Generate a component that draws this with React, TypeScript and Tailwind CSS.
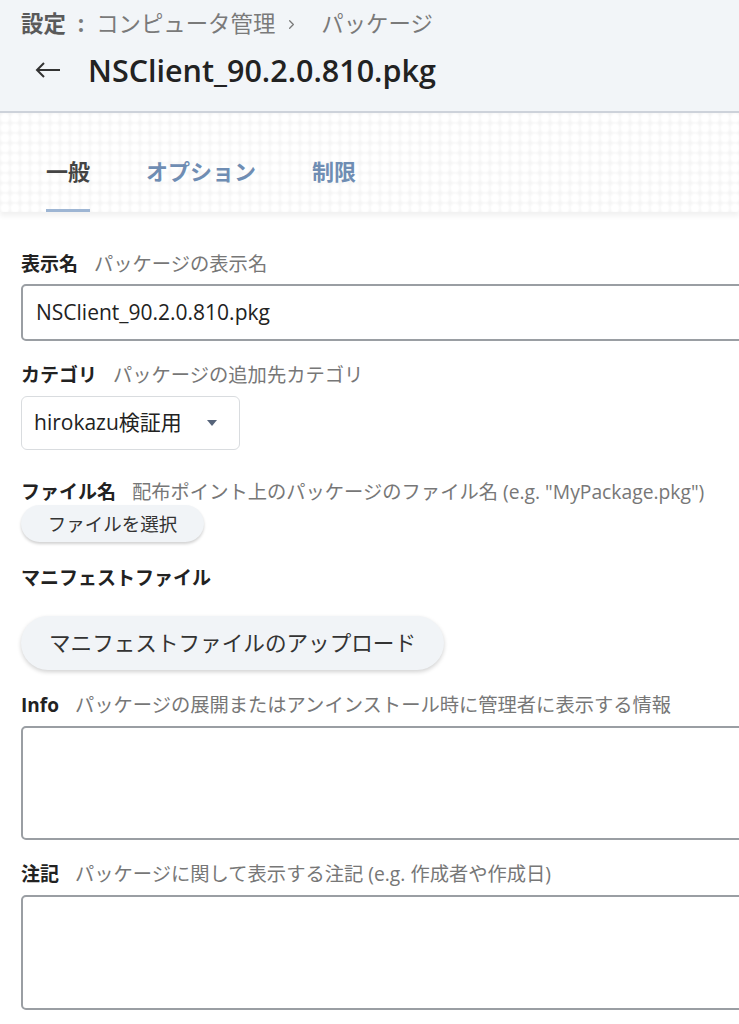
import { ChevronRight } from 'lucide-react';

const font = "font-['Open_Sans','Noto_Sans_CJK_JP',sans-serif]";

function FieldLabel({ name, hint }: { name: string; hint?: string }) {
  return (
    <div className="flex items-baseline gap-[16px] leading-[26px]">
      <span className="text-[19px] font-bold text-[#222]">{name}</span>
      {hint ? <span className="text-[19.3px] text-[#777]">{hint}</span> : null}
    </div>
  );
}

function Tab({ label, active }: { label: string; active?: boolean }) {
  return (
    <div className="flex flex-col items-center">
      <span
        className={
          active
            ? 'text-[22px] font-bold leading-[30px] text-[#444]'
            : 'text-[22px] font-bold leading-[30px] text-[#6f8db3]'
        }
      >
        {label}
      </span>
      <span
        className={active ? 'mt-[23px] h-[3px] w-full bg-[#9db5d3]' : 'mt-[23px] h-[3px] w-full'}
      />
    </div>
  );
}

export default function App() {
  return (
    <div className={`${font} w-[739px] overflow-hidden bg-white text-[#222]`}>
      {/* page header */}
      <header className="h-[113px] border-b-2 border-[#cdd2da] bg-[#f2f5f8] pl-[21px]">
        <div className="flex items-center pt-[8px] text-[22.4px] leading-[32px] text-[#7a7a7a]">
          <span className="font-bold text-[#5a5a5a]">設定</span>
          <span className="mx-[12px] font-bold">:</span>
          <span>コンピュータ管理</span>
          <ChevronRight className="ml-[9px] mr-[22px] h-[15px] w-[15px]" strokeWidth={2} />
          <span>パッケージ</span>
        </div>
        <div className="mt-[10px] flex items-center">
          <svg width="30" height="20" viewBox="0 0 30 20" className="ml-[12px] text-[#333]">
            <path d="M27 10H4M11 3L4 10l7 7" fill="none" stroke="currentColor" strokeWidth="2" />
          </svg>
          <h1 className="ml-[25px] text-[30.5px] font-semibold leading-[40px] text-[#222]">
            NSClient_90.2.0.810.pkg
          </h1>
        </div>
      </header>

      {/* tabs */}
      <nav className="flex h-[99px] items-end gap-[56px] bg-[#f7f7f7] bg-[radial-gradient(circle,#ffffff_45%,#f5f5f5_85%)] bg-[length:10px_10px] pl-[46px] shadow-[0_4px_5px_rgba(0,0,0,0.06)]">
        <Tab label="一般" active />
        <Tab label="オプション" />
        <Tab label="制限" />
      </nav>

      {/* form */}
      <form className="flex flex-col pl-[21px] pt-[39px]">
        <FieldLabel name="表示名" hint="パッケージの表示名" />
        <div className="mt-[7px] flex h-[57px] w-[760px] items-center rounded-[5px] border-2 border-[#9a9ea3] pl-[13px] text-[21px] text-[#222]">
          NSClient_90.2.0.810.pkg
        </div>

        <div className="mt-[21px]">
          <FieldLabel name="カテゴリ" hint="パッケージの追加先カテゴリ" />
        </div>
        <div className="mt-[8px] flex h-[54px] w-[219px] items-center rounded-[6px] border border-[#d9dcdf] pl-[12px] text-[21px] text-[#222]">
          hirokazu検証用
          <svg width="12" height="8" viewBox="0 0 12 8" className="ml-[24px]">
            <path d="M1 1h10L6 7z" fill="#56647a" />
          </svg>
        </div>

        <div className="mt-[29px]">
          <FieldLabel name="ファイル名" hint={'配布ポイント上のパッケージのファイル名 (e.g. "MyPackage.pkg")'} />
        </div>
        <button
          type="button"
          className="mt-[0px] h-[37px] w-[183px] rounded-full bg-[#f1f4f7] text-[18.5px] text-[#333] shadow-[0_2px_3px_rgba(0,0,0,0.18)]"
        >
          ファイルを選択
        </button>

        <div className="mt-[23px]">
          <FieldLabel name="マニフェストファイル" />
        </div>
        <button
          type="button"
          className="mt-[25px] h-[54px] w-[423px] rounded-full bg-[#f1f4f7] text-[21.6px] text-[#333] shadow-[0_2px_4px_rgba(0,0,0,0.18)]"
        >
          マニフェストファイルのアップロード
        </button>

        <div className="mt-[22px]">
          <FieldLabel name="Info" hint="パッケージの展開またはアンインストール時に管理者に表示する情報" />
        </div>
        <div className="mt-[8px] h-[114px] w-[760px] rounded-[5px] border-2 border-[#9a9ea3]" />

        <div className="mt-[21px]">
          <FieldLabel name="注記" hint="パッケージに関して表示する注記 (e.g. 作成者や作成日)" />
        </div>
        <div className="mt-[8px] h-[115px] w-[760px] rounded-[5px] border-2 border-[#9a9ea3]" />
        <div className="h-[18px]" />
      </form>
    </div>
  );
}
